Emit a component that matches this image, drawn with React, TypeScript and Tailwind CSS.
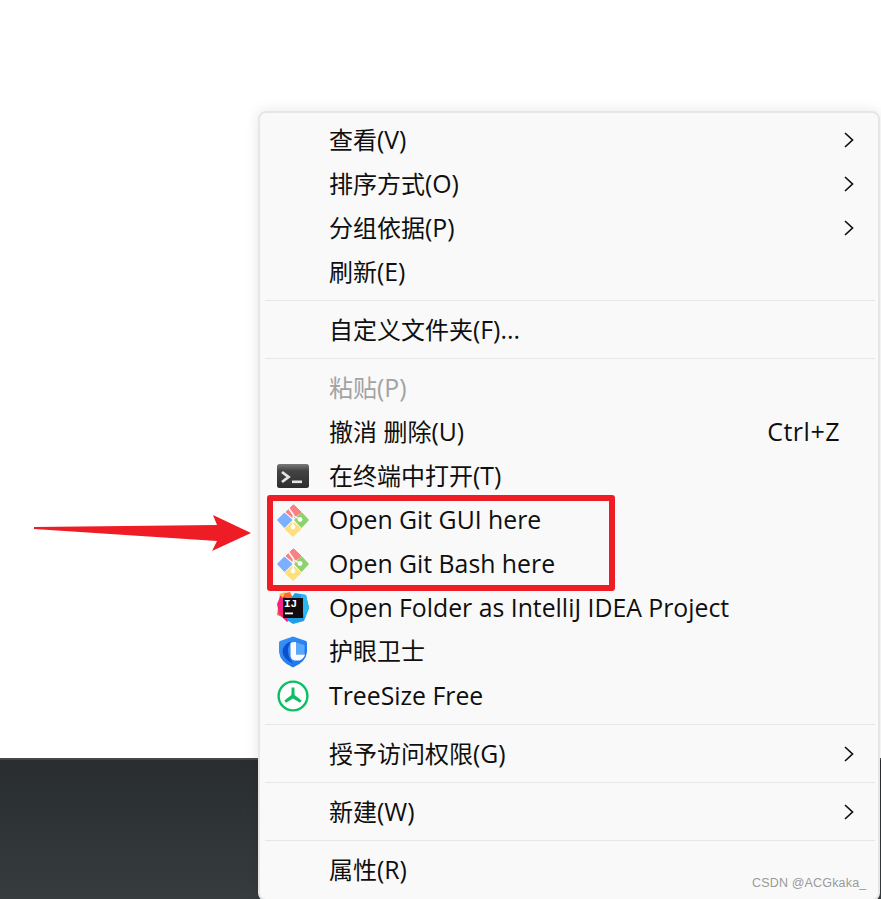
import React from "react";

const font = { fontFamily: '"Open Sans", "Noto Sans CJK SC", sans-serif' };

function Chevron() {
  return (
    <svg width="10" height="16" viewBox="0 0 10 16" className="shrink-0">
      <path d="M1 1 L8.5 8 L1 15" fill="none" stroke="#111" strokeWidth="1.7" />
    </svg>
  );
}

function TerminalIcon() {
  return (
    <svg width="32" height="24" viewBox="0 0 32 24">
      <defs>
        <linearGradient id="term" x1="0" y1="0" x2="0" y2="1">
          <stop offset="0" stopColor="#7a7a7a" />
          <stop offset="0.28" stopColor="#444" />
          <stop offset="1" stopColor="#2d2d2d" />
        </linearGradient>
      </defs>
      <rect width="32" height="24" rx="2.5" fill="url(#term)" />
      <path d="M5 8 L11.5 13 L5 18" fill="none" stroke="#e4e4e4" strokeWidth="2.8" />
      <rect x="15" y="16.5" width="10" height="2.6" fill="#e4e4e4" />
    </svg>
  );
}

function GitIcon() {
  return (
    <svg width="32" height="34" viewBox="0 0 32 34">
      <path d="M7.5 10.5 L14.5 17 L7.5 24 L1 17 Z" fill="#7cb0ff" stroke="#7cb0ff" strokeLinejoin="round" strokeWidth="1.6" />
      <path d="M9 9 L15.5 2.5 Q16.5 1.5 17.5 2.5 L24 9 L16.5 15.5 Z" fill="#fb8080" stroke="#fb8080" strokeLinejoin="round" strokeWidth="1" />
      <path d="M24.5 10 L31 17 L24.5 24 L18 17 Z" fill="#8ed16f" stroke="#8ed16f" strokeLinejoin="round" strokeWidth="1.6" />
      <path d="M16 19 L23.5 26 L16 33 L8.5 26 Z" fill="#ffdf7a" stroke="#ffdf7a" strokeLinejoin="round" strokeWidth="1.6" />
      <path d="M11.5 5 L16.5 12 L16 23" fill="none" stroke="#fafafa" strokeWidth="1.7" />
      <path d="M17 13 L22 16" fill="none" stroke="#fafafa" strokeWidth="1.4" />
      <circle cx="23" cy="16.5" r="2.4" fill="#fafafa" />
      <circle cx="16" cy="24" r="2.4" fill="#fafafa" />
    </svg>
  );
}

function IdeaIcon() {
  return (
    <svg width="32" height="32" viewBox="0 0 32 32">
      <path d="M3 2 L13 0 L17 8 L8 26 L0 23 Z" fill="#fd6b35" />
      <path d="M0 12 L4 3 L10 6 L16 24 L10 30 L2 22 Z" fill="#f5237f" />
      <path d="M2 2 L8 0 L6 6 Z" fill="#fcc73c" />
      <path d="M18 1 L29 3 L32 16 L27 29 L16 32 L10 28 L14 6 Z" fill="#1f9ee8" />
      <path d="M24 2 L29 3 L32 16 L28 26 L24 16 Z" fill="#29b8f2" />
      <rect x="6" y="6" width="20" height="20" fill="#120a0c" />
      <text x="7" y="15" fill="#fff" fontSize="11" fontWeight="700" fontFamily='"Liberation Mono", monospace'>IJ</text>
      <rect x="8" y="20.5" width="8" height="1.8" fill="#fff" />
    </svg>
  );
}

function ShieldIcon() {
  return (
    <svg width="28" height="32" viewBox="0 0 28 32">
      <defs>
        <linearGradient id="shield" x1="0" y1="0" x2="1" y2="1">
          <stop offset="0" stopColor="#3a96f8" />
          <stop offset="1" stopColor="#1a6fe8" />
        </linearGradient>
      </defs>
      <path d="M14 0.5 L27 5 Q28 5.5 28 7 L28 16 Q27 26 14 31.5 Q1 26 0 16 L0 7 Q0 5.5 1 5 Z" fill="url(#shield)" />
      <path d="M12 5.5 Q4 8 3.5 15.5 Q4 23 14 27.5 Q8 20 9 12 Z" fill="#0a50cf" />
      <path d="M17 6.5 L25.5 9 L25.5 18 L17 18 Z" fill="#5aa9f9" />
      <path d="M11.5 7 Q14 5.5 17 6 L17 18.5 L26 18.5 Q25 22.5 20.5 24.5 L15.5 24.5 Q11.5 23.5 11.5 19 Z" fill="#fafcff" />
    </svg>
  );
}

function TreeIcon() {
  return (
    <svg width="32" height="32" viewBox="0 0 32 32">
      <circle cx="16" cy="16" r="14.4" fill="#fff" stroke="#0cbf63" strokeWidth="2.4" />
      <path d="M14.6 7.5 L17.4 7.5 L17.6 15 L24.6 20.5 L23 22.8 L16 18.5 L9 22.8 L7.4 20.5 L14.4 15 Z" fill="#0cbf63" />
    </svg>
  );
}

// the Latin runs come out a bit narrow next to the CJK at the same size
function Label({ text }: { text: string }) {
  const runs = text.match(/[\x20-\x7e]+|[^\x20-\x7e]+/g) ?? [];
  return (
    <>
      {runs.map((run, idx) =>
        /^[\x20-\x7e]/.test(run) ? (
          <span key={idx} className="text-[24.8px]">
            {run}
          </span>
        ) : (
          <span key={idx}>{run}</span>
        )
      )}
    </>
  );
}

function Item({
  icon,
  label,
  hint,
  more,
  disabled,
}: {
  icon?: React.ReactNode;
  label: string;
  hint?: string;
  more?: boolean;
  disabled?: boolean;
}) {
  return (
    <div className="flex h-11 items-center pl-[17px] pr-[24px]">
      <div className="flex h-8 w-8 shrink-0 items-center justify-center">{icon}</div>
      <span className={`mb-[2px] ml-5 flex-1 whitespace-nowrap text-[24px] leading-none ${disabled ? "text-[#a3a3a3]" : "text-[#0f0f0f]"}`}>
        <Label text={label} />
      </span>
      {hint && <span className="mb-[2px] mr-[14px] text-[25px] leading-none tracking-[0.5px] text-[#0f0f0f]">{hint}</span>}
      {more && <Chevron />}
    </div>
  );
}

function Sep() {
  return <div className="ml-[5px] mr-[3px] mb-[7px] mt-[6px] h-px bg-[#e6e6e6]" />;
}

export default function App() {
  return (
    <div className="relative flex h-[899px] w-[881px] flex-col overflow-hidden bg-white" style={font}>
      <div className="h-[758px] shrink-0" />
      <div className="flex-1 border-t-2 border-[#45484a] bg-gradient-to-b from-[#292d30] to-[#373c3f]" />

      <div className="absolute left-[258px] top-[111px] h-[790px] w-[622px] rounded-lg border-2 border-[#e6e6e6] bg-[#f9f9f9] pt-[5px] shadow-[0_0_14px_rgba(0,0,0,0.1)]">
        <Item label="查看(V)" more />
        <Item label="排序方式(O)" more />
        <Item label="分组依据(P)" more />
        <Item label="刷新(E)" />
        <Sep />
        <Item label="自定义文件夹(F)..." />
        <Sep />
        <Item label="粘贴(P)" disabled />
        <Item label="撤消 删除(U)" hint="Ctrl+Z" />
        <Item label="在终端中打开(T)" icon={<TerminalIcon />} />
        <Item label="Open Git GUI here" icon={<GitIcon />} />
        <Item label="Open Git Bash here" icon={<GitIcon />} />
        <Item label="Open Folder as IntelliJ IDEA Project" icon={<IdeaIcon />} />
        <Item label="护眼卫士" icon={<ShieldIcon />} />
        <Item label="TreeSize Free" icon={<TreeIcon />} />
        <Sep />
        <Item label="授予访问权限(G)" more />
        <Sep />
        <Item label="新建(W)" more />
        <Sep />
        <Item label="属性(R)" />
      </div>

      {/* annotation drawn on top of the screenshot */}
      <div className="absolute left-[267px] top-[495px] h-[96px] w-[348px] rounded-[3px] border-[6px] border-[#ee1c25]" />
      <svg className="absolute left-0 top-[500px]" width="260" height="60" viewBox="0 0 260 60">
        <path d="M34 27 L34 29 L217 41 L212 51 L251 33 L213 15 L217 25 Z" fill="#ee1c25" />
      </svg>
      <span
        className="absolute left-[752px] top-[876px] text-[12.5px] leading-[15px] tracking-[0.17px] text-[#9a9a9a]"
        style={{ fontFamily: '"Liberation Sans", sans-serif' }}
      >
        CSDN @ACGkaka_
      </span>
    </div>
  );
}
